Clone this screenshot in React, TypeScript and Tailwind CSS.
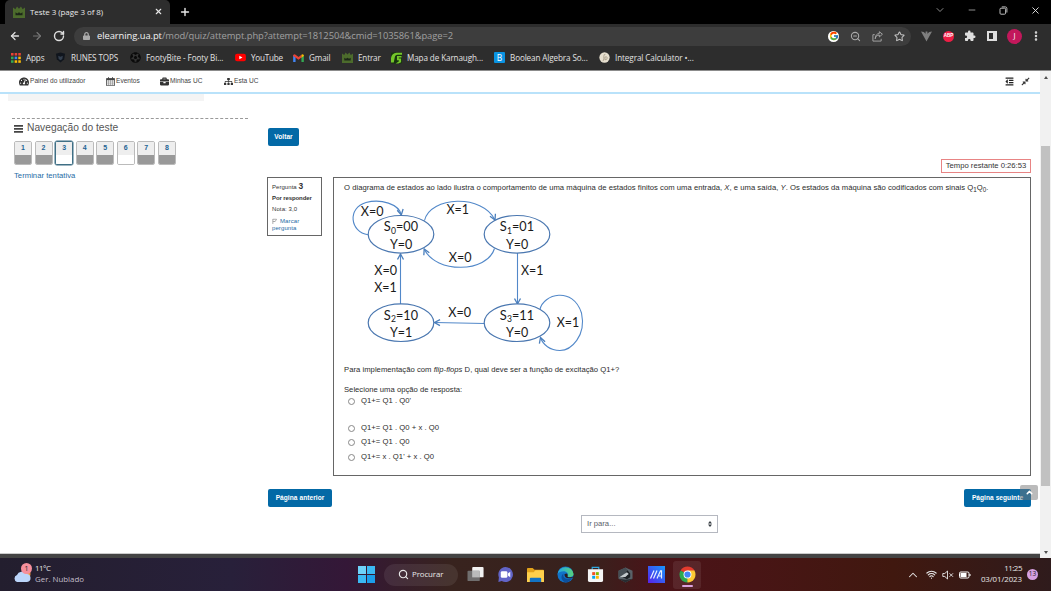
import React from "react";
import {
  FaBars,
  FaBriefcase,
  FaCalendarAlt,
  FaCompressAlt,
  FaLock,
  FaOutdent,
  FaSitemap,
  FaTachometerAlt,
  FaFutbol,
} from "react-icons/fa";
import { FcGoogle } from "react-icons/fc";
import { MdExtension } from "react-icons/md";
import {
  ArrowLeft,
  ArrowRight,
  ChevronDown,
  ChevronUp,
  EllipsisVertical,
  Minus,
  Plus,
  RotateCw,
  Search,
  Star,
  Wifi,
  X,
  ZoomOut,
} from "lucide-react";

function UaLogo({ className }: { className: string }) {
  return (
    <svg viewBox="0 0 12 12" className={className}>
      <path d="M0 1.5 2.4 3.2 4 .6 6 2.8 8 .6 9.6 3.2 12 1.5V12H0Z" fill="#4c6b2c" />
      <path d="M2.5 6.3 4.3 7.4 6 6.3 7.7 7.4 9.5 6.3V9.3H2.5Z" fill="#1c2618" />
    </svg>
  );
}

function TabStrip() {
  return (
    <div className="flex h-6 bg-black text-[#e8e8e8]">
      <div className="ml-[5px] flex h-6 w-[165px] items-center rounded-t-[5px] bg-[#2d2d2d] pr-[7px] pb-px pl-2">
        <UaLogo className="h-[12px] w-[12px]" />
        <span className="ml-[5px] grow text-[8px] tracking-[-0.07px] whitespace-nowrap">Teste 3 (page 3 of 8)</span>
        <X className="h-[9px] w-[9px]" strokeWidth={3} />
      </div>
      <Plus className="mt-[6px] ml-[9px] h-[12px] w-[12px]" strokeWidth={2.8} />
      <div className="ml-auto flex h-5 items-center pr-[10px]">
        <ChevronDown className="mr-[21px] h-[12px] w-[12px] text-[#999]" strokeWidth={1.8} />
        <Minus className="mr-[22px] h-[10px] w-[10px] text-[#aaa]" strokeWidth={2} />
        <svg viewBox="0 0 9 9" className="mr-[22px] h-[9px] w-[9px]" fill="none" stroke="#bbb" strokeWidth="1">
          <rect x="1" y="2.2" width="5.6" height="6" rx="1" />
          <path d="M2.8 .9H6.300Q7.900 .9 7.900 2.500V6.500" />
        </svg>
        <X className="h-[11px] w-[11px]" strokeWidth={2} />
      </div>
    </div>
  );
}

function AddressBar() {
  return (
    <div className="flex h-6 items-center bg-[#2d2d2d] text-[#dedede]">
      <ArrowLeft className="ml-[9px] h-[12px] w-[12px]" strokeWidth={2.6} />
      <ArrowRight className="ml-[10px] h-[12px] w-[12px] text-[#777]" strokeWidth={2.2} />
      <RotateCw className="ml-[10px] h-[12px] w-[12px]" strokeWidth={2.8} />
      <div className="ml-[9px] flex h-[19px] w-[837px] items-center rounded-full bg-[#3d3d3d] pr-[6px] pl-[9px]">
        <FaLock className="h-[8px] w-[7px] text-[#aaa]" />
        <span className="ml-[7px] text-[9.4px] tracking-[-0.065px] whitespace-nowrap text-[#a0a0a0]">
          <span className="text-[#f2f2f2]">elearning.ua.pt</span>/mod/quiz/attempt.php?attempt=1812504&amp;cmid=1035861&amp;page=2
        </span>
        <div className="ml-auto flex items-center">
          <span className="mr-[11px] flex h-[11px] w-[11px] items-center justify-center rounded-full bg-white">
            <FcGoogle className="h-[10px] w-[10px]" />
          </span>
          <ZoomOut className="mr-[11px] h-[11px] w-[11px] text-[#aaa]" strokeWidth={2.3} />
          <svg viewBox="0 0 12 12" className="mr-[11px] h-[11px] w-[11px]" fill="none" stroke="#aaa" strokeWidth="1">
            <path d="M3 4H1V11H10V8.5M3.5 8.5C4 5.5 5.5 4.5 8 4.4V6.5L11.4 3.5 8 .8V2.7C5 3 3.6 5 3.5 8.5Z" />
          </svg>
          <Star className="h-[11px] w-[11px] text-[#c0c0c0]" strokeWidth={2.3} />
        </div>
      </div>
      <svg viewBox="0 0 12 12" className="ml-[10px] h-[12px] w-[11px]">
        <path d="M0 1 3 1.5 5 3.5V1H7V3.5L9 1.5 12 1 7 10 6 12 5 10Z" fill="#7e7e7e" />
      </svg>
      <span className="ml-[11px] flex h-[11px] w-[11px] items-center justify-center rounded-full bg-[#ed1e45] font-[Liberation_Sans] text-[4.6px] leading-none font-bold text-white">
        ABP
      </span>
      <MdExtension className="ml-[10px] h-[12px] w-[12px]" />
      <span className="ml-[11px] h-[10px] w-[10px] border-2 border-r-4 border-[#dedede]" />
      <span className="ml-[10px] flex h-[15px] w-[15px] items-center justify-center rounded-full bg-[#c2185b] text-[7.5px] leading-none text-white">
        J
      </span>
      <EllipsisVertical className="ml-[8px] h-[12px] w-[12px]" strokeWidth={3} />
    </div>
  );
}

function AppsIcon() {
  const colors = ["#ea4335", "#ea4335", "#ea4335", "#34a853", "#4285f4", "#fbbc04", "#34a853", "#fbbc04", "#fbbc04"];
  return (
    <svg viewBox="0 0 11 11" className="h-[10px] w-[10px]">
      {colors.map((c, i) => (
        <rect key={i} x={(i % 3) * 4} y={Math.floor(i / 3) * 4} width="2.8" height="2.8" fill={c} />
      ))}
    </svg>
  );
}

const bookmarks: { width: string; label: string; text: string; icon: React.ReactNode }[] = [
  { width: "w-[45px]", label: "Apps", text: "tracking-[-0.1px]", icon: <AppsIcon /> },
  {
    width: "w-[75px]",
    label: "RUNES TOPS",
    text: "tracking-[-0.1px]",
    icon: (
      <svg viewBox="0 0 12 12" className="h-[11px] w-[11px]">
        <path d="M1 2 6 .5 11 2 10 8 6 11.5 2 8Z" fill="#10151d" />
        <path d="M3.5 4 6 5.2 8.5 4 8 7.5 6 9 4 7.5Z" fill="#34404f" />
      </svg>
    ),
  },
  {
    width: "w-[105px]",
    label: "FootyBite - Footy Bi...",
    text: "tracking-[-0.07px]",
    icon: (
      <span className="flex h-[11px] w-[11px] items-center justify-center rounded-full bg-[#333]">
        <FaFutbol className="h-[11px] w-[11px] text-[#0a0a0a]" />
      </span>
    ),
  },
  {
    width: "w-[58px]",
    label: "YouTube",
    text: "tracking-[-0.2px]",
    icon: (
      <svg viewBox="0 0 12 10" className="h-[9px] w-[11px]">
        <rect y="0.8" width="12" height="8.4" rx="2.2" fill="#f00" />
        <path d="M4.7 3V7L8.2 5Z" fill="#fff" />
      </svg>
    ),
  },
  {
    width: "w-[49px]",
    label: "Gmail",
    text: "tracking-[-0.1px]",
    icon: (
      <svg viewBox="0 0 12 9" className="h-[8px] w-[11px]">
        <path d="M0 1V9H2.7V3.5Z" fill="#4285f4" />
        <path d="M12 1V9H9.3V3.5Z" fill="#34a853" />
        <path d="M0 1.5Q1-.5 2.7.8L6 3.4 9.3.8V4L6 6.6 0 2.2Z" fill="#ea4335" />
        <path d="M9.3.8Q11-.5 12 1.5V2.2L9.3 4.1Z" fill="#fbbc04" />
      </svg>
    ),
  },
  { width: "w-[49px]", label: "Entrar", text: "tracking-[-0.15px]", icon: <UaLogo className="h-[11px] w-[11px]" /> },
  {
    width: "w-[103px]",
    label: "Mapa de Karnaugh...",
    text: "tracking-[-0.1px]",
    icon: (
      <svg viewBox="0 0 12 12" className="h-[12px] w-[12px]">
        <rect width="12" height="12" rx="1" fill="#17330f" />
        <path d="M0 6Q1 .5 6 .3H12V2.500H8Q4.500 2 4 6L3 11H0ZM6.500 3.800H11.500V5.500H8.500V6.600H11V10.500L8 12H5L8.500 9.800V8.500H6.500Z" fill="#74c62a" />
      </svg>
    ),
  },
  {
    width: "w-[105px]",
    label: "Boolean Algebra So...",
    text: "tracking-[-0.1px]",
    icon: (
      <span className="flex h-[11px] w-[11px] items-center justify-center rounded-[1px] bg-[#0a93e2] text-[8.5px] leading-none text-white">
        B
      </span>
    ),
  },
  {
    width: "w-[110px]",
    label: "Integral Calculator •...",
    text: "tracking-[-0.08px]",
    icon: (
      <svg viewBox="0 0 12 12" className="h-[11px] w-[11px]">
        <circle cx="6" cy="6" r="5.6" fill="#e6dfcf" />
        <path d="M4 9.5Q5.3 10 5.3 7V4.5Q5.3 2 7 2.5M6.5 5.5Q9 4.5 9 6.5T6.5 8.5Z" fill="none" stroke="#aaa08b" />
      </svg>
    ),
  },
];

function BookmarkBar() {
  return (
    <div className="flex h-[23px] items-center border-b border-[#8c8c8c] bg-[#2d2d2d] pb-[2px] pl-[10px] text-[8.1px] text-[#e2e2e2]">
      {bookmarks.map((b) => (
        <div key={b.label} className={`flex shrink-0 items-center gap-[5px] ${b.width}`}>
          <span className="flex w-[11px] justify-center">{b.icon}</span>
          <span className={`whitespace-nowrap ${b.text}`}>{b.label}</span>
        </div>
      ))}
    </div>
  );
}

function CalendarIcon() {
  return (
    <svg viewBox="0 0 9 9" className="h-[9px] w-[9px]">
      <path d="M.5 1.500H8.500V8.700H.5Z" fill="#fff" stroke="#444" strokeWidth="0.8" />
      <path d="M.5 1.500H8.500V3.200H.5ZM2 .2H3V2H2ZM6 .2H7V2H6Z" fill="#444" />
      <path d="M.5 5H8.500M.5 6.900H8.500M2.500 3V8.700M4.500 3V8.700M6.500 3V8.700" stroke="#777" strokeWidth="0.5" />
    </svg>
  );
}

function SiteMenu() {
  return (
    <div className="flex h-[23px] items-center border-b-2 border-[#b9e2fa] pr-[10px] pb-px pl-[19px] text-[6.57px] text-[#444]">
      <div className="flex w-[87px] items-center gap-[1px]">
        <FaTachometerAlt className="h-[9px] w-[10px] text-[#333]" />
        Painel do utilizador
      </div>
      <div className="flex w-[54px] items-center gap-[1px]">
        <CalendarIcon />
        Eventos
      </div>
      <div className="flex w-[64px] items-center gap-[1px]">
        <FaBriefcase className="h-[9px] w-[9px] text-[#333]" />
        Minhas UC
      </div>
      <div className="flex items-center gap-[1px]">
        <FaSitemap className="h-[9px] w-[9px] text-[#333]" />
        Esta UC
      </div>
      <FaOutdent className="ml-auto h-[9px] w-[9px] text-[#222]" />
      <FaCompressAlt className="ml-[7px] h-[9px] w-[9px] text-[#333]" />
    </div>
  );
}

const questions = [
  { n: 1, box: "border-[#bbb]", foot: "bg-[#999]" },
  { n: 2, box: "border-[#bbb]", foot: "bg-[#999]" },
  { n: 3, box: "border-[#3f6f85] ring-[0.5px] ring-[#3f6f85]", foot: "bg-white" },
  { n: 4, box: "border-[#bbb]", foot: "bg-[#999]" },
  { n: 5, box: "border-[#bbb]", foot: "bg-[#999]" },
  { n: 6, box: "border-[#bbb]", foot: "bg-white" },
  { n: 7, box: "border-[#bbb]", foot: "bg-[#999]" },
  { n: 8, box: "border-[#bbb]", foot: "bg-[#999]" },
];

function QuizNavigation() {
  return (
    <aside className="flex w-[268px] shrink-0 flex-col">
      <div className="ml-2 h-[7px] w-[196px] bg-[#f4f4f4]" />
      <div className="mt-[17px] ml-[12px] w-[236px] border-t border-dashed border-[#999]" />
      <div className="mt-[2px] ml-[14px] flex h-[14px] items-center gap-[4px] text-[10.25px] text-[#555]">
        <svg viewBox="0 0 9 9" className="h-[9px] w-[9px]" fill="#444">
          <path d="M0 1H9V2.700H0ZM0 4H9V5.700H0ZM0 7H9V8.700H0Z" />
        </svg>
        Navegação do teste
      </div>
      <div className="mt-[6px] ml-[14px] flex gap-[2.55px]">
        {questions.map((q) => (
          <div
            key={q.n}
            className={`flex h-[24px] w-[18px] flex-col overflow-hidden rounded-[2px] border text-center text-[7px] leading-[12px] font-bold text-[#1d6394] ${q.box}`}
          >
            <div className="h-[13px] bg-[#eee]">{q.n}</div>
            <div className={`grow ${q.foot}`} />
          </div>
        ))}
      </div>
      <div className="mt-[6px] ml-[14px] text-[7.66px] leading-[9px] tracking-[0.03px] text-[#1d6aa5]">Terminar tentativa</div>
    </aside>
  );
}

const ink = "#1a1a1a";

function Label({ x, y, w, children }: { x: number; y: number; w: number; children: string }) {
  return (
    <text x={x} y={y} textLength={w} lengthAdjust="spacingAndGlyphs" fontSize="13.6" fill={ink} className="font-[Lato]">
      {children}
    </text>
  );
}

function StateNode({ cx, cy, index, code, output }: { cx: number; cy: number; index: string; code: string; output: string }) {
  return (
    <g className="font-[Lato]">
      <ellipse cx={cx} cy={cy} rx="32.8" ry="18.8" fill="#fff" stroke="#4a77b0" strokeWidth="1.2" />
      <Label x={cx - 17.2} y={cy - 3} w={7}>
        S
      </Label>
      <text x={cx - 10} y={cy - 0.4} fontSize="8.6" fill={ink}>
        {index}
      </text>
      <Label x={cx - 5} y={cy - 3} w={22}>
        {"=" + code}
      </Label>
      <Label x={cx - 11} y={cy + 14.4} w={22.3}>
        {"Y=" + output}
      </Label>
    </g>
  );
}

function StateDiagram() {
  return (
    <svg viewBox="344 197 246 158" className="block h-[158px] w-[246px]">
      <defs>
        <marker id="tip" viewBox="0 0 8 8" refX="6.5" refY="4" markerWidth="8" markerHeight="8" markerUnits="userSpaceOnUse" orient="auto">
          <path d="M1 1 6.5 4 1 7" fill="none" stroke="#4a7ebb" strokeWidth="1.3" />
        </marker>
      </defs>
      <g fill="none" stroke="#5288c9" strokeWidth="1.1">
        <path d="M368 234.7C350 232 347 208 366 202.5C381 198.500 399 204 401.300 215" markerEnd="url(#tip)" />
        <path d="M424.500 220.500C430 196 483 194 495 220" markerEnd="url(#tip)" />
        <path d="M494.500 248.500C487 273 436 274 424.200 249" markerEnd="url(#tip)" />
        <path d="M517.500 253V304" markerEnd="url(#tip)" />
        <path d="M484.500 323.500 434.500 322.500" markerEnd="url(#tip)" />
        <path d="M400.500 304V254" markerEnd="url(#tip)" />
        <path d="M540 309.500C543 294 573 286 581.500 313C586.500 336 571 350.500 560 350.500C550 350.300 543 345 540.500 337.500" markerEnd="url(#tip)" />
      </g>
      <StateNode cx={401} cy={234.3} index="0" code="00" output="0" />
      <StateNode cx={517} cy={234.3} index="1" code="01" output="0" />
      <StateNode cx={401} cy={322.7} index="2" code="10" output="1" />
      <StateNode cx={517} cy={322.7} index="3" code="11" output="0" />
      <Label x={360.800} y={216} w={22.800}>X=0</Label>
      <Label x={446.500} y={214.300} w={22.500}>X=1</Label>
      <Label x={448.800} y={262} w={22.800}>X=0</Label>
      <Label x={374.300} y={274.500} w={22.800}>X=0</Label>
      <Label x={374.300} y={292} w={22.500}>X=1</Label>
      <Label x={521} y={274.500} w={22.500}>X=1</Label>
      <Label x={448.300} y={316.800} w={22.800}>X=0</Label>
      <Label x={556.800} y={326.500} w={22.500}>X=1</Label>
    </svg>
  );
}

const options = [
  { label: "Q1+= Q1 . Q0'", row: "h-[14px]" },
  { label: "Q1+= Q1 . Q0 + x . Q0", row: "mt-[13px] h-[14px]" },
  { label: "Q1+= Q1 . Q0", row: "h-[15px]" },
  { label: "Q1+= x . Q1' + x . Q0", row: "h-[14px]" },
];

const button =
  "flex h-[18px] items-center justify-center rounded-[2px] bg-[#0369a6] text-[6.57px] font-bold tracking-[0.06px] whitespace-nowrap text-white";

function QuestionInfo() {
  return (
    <div className="flex h-[59px] w-[55px] shrink-0 flex-col border border-[#666] pt-[3px] pl-[4px] text-[6px] font-bold text-[#333]">
      <div className="h-[10px] leading-[10px]">
        <span className="font-normal tracking-[0.05px]">Pergunta</span> <span className="text-[8.4px]">3</span>
      </div>
      <div className="mt-[3px] h-[9px] leading-[9px] tracking-[-0.1px]">Por responder</div>
      <div className="mt-[2px] h-[9px] leading-[9px] font-normal tracking-[0.1px]">Nota: 3,0</div>
      <div className="mt-[3px] flex h-[8px] items-center gap-[3px] font-normal tracking-[0.1px] text-[#1d6aa5]">
        <svg viewBox="0 0 6 7" className="h-[7px] w-[5px]" fill="none" stroke="#888" strokeWidth="0.8">
          <path d="M1 .5V6.500M1 .8H5.500L3.800 3.500H1" />
        </svg>
        Marcar
      </div>
      <div className="h-[7px] leading-[7px] font-normal tracking-[0.1px] text-[#1d6aa5]">pergunta</div>
    </div>
  );
}

function QuestionBox() {
  return (
    <div className="flex h-[299px] w-[698px] flex-col border border-[#666] pl-[10px] text-[7.66px] text-[#2b2b2b]">
      <div className="mt-[4px] h-[15px] leading-[11px] tracking-[0.023px] whitespace-nowrap">
        O diagrama de estados ao lado ilustra o comportamento de uma máquina de estados finitos com uma entrada, <i>X</i>, e uma
        saída, <i>Y</i>. Os estados da máquina são codificados com sinais Q<sub className="text-[6.3px]">1</sub>Q
        <sub className="text-[6.3px]">0</sub>.
      </div>
      <StateDiagram />
      <div className="mt-[9px] h-[11px] leading-[11px] tracking-[0.03px]">
        Para implementação com <i>flip-flops</i> D, qual deve ser a função de excitação Q1+?
      </div>
      <div className="mt-[9px] h-[11px] leading-[11px] tracking-[0.01px]">Selecione uma opção de resposta:</div>
      {options.map((o) => (
        <div key={o.label} className={`flex items-start ${o.row}`}>
          <span className="mt-[2.500px] ml-[4px] h-[7px] w-[7px] rounded-full border-[0.800px] border-[#888]" />
          <span className="ml-[6px] leading-[12px] tracking-[0.04px]">{o.label}</span>
        </div>
      ))}
    </div>
  );
}

function QuizPage() {
  return (
    <div className="flex h-[487px] bg-white font-[Liberation_Sans]">
      <div className="flex w-[1040px] flex-col">
        <SiteMenu />
        <div className="flex h-[459px]">
          <QuizNavigation />
          <main className="flex w-[763px] flex-col">
            <div className={`mt-[34px] w-[31px] ${button}`}>Voltar</div>
            <div className="mt-[13px] ml-auto flex h-[14px] w-[90px] items-center justify-center border border-[#e88484] text-[7.66px] whitespace-nowrap text-[#333]">
              Tempo restante 0:26:53
            </div>
            <div className="mt-[4px] -ml-px flex justify-between">
              <QuestionInfo />
              <QuestionBox />
            </div>
            <div className="mt-[13px] flex justify-between">
              <div className={`w-[64px] ${button}`}>Página anterior</div>
              <div className={`relative w-[67px] ${button}`}>
                Página seguinte
                <div className="absolute -top-[4px] left-[56px] flex h-[15px] w-[18px] items-center justify-center rounded-[2px] bg-[#777]/50">
                  <ChevronUp className="h-[9px] w-[9px] text-white" strokeWidth={4} />
                </div>
              </div>
            </div>
            <div className="mt-[8px] ml-[313px] flex h-[18px] w-[137px] items-center justify-between border border-[#b5b8c0] px-[5px] pb-px text-[7.66px] text-[#5a6068]">
              Ir para...
              <svg viewBox="0 0 4 6" className="h-[6px] w-[4px]" fill="#343a40">
                <path d="M0 2.500 2 0 4 2.500ZM0 3.500H4L2 6Z" />
              </svg>
            </div>
          </main>
        </div>
        <div className="h-[5px] border-t border-[#ccc] bg-[#444]" />
      </div>
      <div className="flex w-[11px] flex-col items-center bg-[#f1f1f1]">
        <div className="mt-[5px] h-0 w-0 border-x-[2.500px] border-b-[3px] border-x-transparent border-b-[#505050]" />
        <div className="mt-[67px] h-[340px] w-[9px] bg-[#c1c1c1]" />
        <div className="mt-auto mb-[4px] h-0 w-0 border-x-[2.500px] border-t-[3px] border-x-transparent border-t-[#505050]" />
      </div>
    </div>
  );
}

function TaskbarIcons() {
  return (
    <div className="flex items-center">
      <svg viewBox="0 0 18 18" className="mr-[12px] h-[17px] w-[18px]">
        <rect x="5" y="1" width="12" height="11" rx="1" fill="#f2f2f2" />
        <rect x="0" y="5" width="13" height="11" rx="1" fill="#777" fillOpacity="0.9" />
        <rect x="5" y="5" width="8" height="7" fill="#bbb" />
      </svg>
      <svg viewBox="0 0 18 18" className="mr-[13px] h-[17px] w-[17px]">
        <path d="M9 1A8 8 0 1 1 5 16L1.500 17 2 12A8 8 0 0 1 9 1Z" fill="#6264c7" />
        <rect x="4" y="5.500" width="7" height="7" rx="1.500" fill="#fff" />
        <path d="M11.500 8 14 6V12L11.500 10Z" fill="#fff" />
      </svg>
      <svg viewBox="0 0 18 16" className="mr-[13px] h-[16px] w-[17px]">
        <path d="M0 1.500Q0 .5 1 .5H6L8 2.500H17Q18 2.500 18 3.500V15H0Z" fill="#e2a21b" />
        <path d="M0 5H7L9 3H17Q18 3 18 4V15.500H0Z" fill="#ffd04c" />
        <path d="M3 15.500V12Q3 11 4 11H14Q15 11 15 12V15.500Z" fill="#1273c4" />
      </svg>
      <svg viewBox="0 0 18 18" className="mr-[13px] h-[17px] w-[17px]">
        <defs>
          <linearGradient id="edge" x1="0" y1="0" x2="1" y2="0">
            <stop offset="0" stopColor="#1fa3e8" />
            <stop offset="1" stopColor="#58d37a" />
          </linearGradient>
        </defs>
        <circle cx="9" cy="9" r="8.500" fill="#1173c9" />
        <path d="M.5 8.500A8.600 8.600 0 0 1 17.500 8.500C17.500 12 12 12.500 11 11C13 8 10 5.500 7 5.500Q2.500 5.500.5 8.500Z" fill="url(#edge)" />
        <path d="M7 8C5.500 12 9 15 16 13Q13 17.500 9 17.400C3.500 15 4 10 7 8Z" fill="#0c4f9c" />
        <path d="M8 8.500C7.500 12.500 11 14 16.500 12.500L17.500 11Q13 13 11 11 12 9.500 10.500 8Z" fill="#2b1a1c" />
      </svg>
      <svg viewBox="0 0 18 18" className="mr-[14px] h-[17px] w-[17px]">
        <path d="M5.500 4V1.500H12.500V4" fill="none" stroke="#2fa8e0" strokeWidth="1.200" />
        <path d="M1 3.500H17V15Q17 17 15 17H3Q1 17 1 15Z" fill="#f5f5f5" />
        <path d="M5.500 6.500H8.600V9.600H5.500Z" fill="#f25022" />
        <path d="M9.400 6.500H12.500V9.600H9.400Z" fill="#7fba00" />
        <path d="M5.500 10.400H8.600V13.500H5.500Z" fill="#00a4ef" />
        <path d="M9.400 10.400H12.500V13.500H9.400Z" fill="#ffb900" />
      </svg>
      <svg viewBox="0 0 16 17" className="mr-[15px] h-[16px] w-[15px]">
        <path d="M8 .5 15.500 4V12.500L8 16.500.5 12.500V4Z" fill="#596268" />
        <path d="M8 .5 11 4.500 2 10.500.5 11V4Z" fill="#454e54" />
        <path d="M10 3.500 13 7V11L9.500 13 5 11 7 8.500Z" fill="#1b2024" />
        <path d="M1.500 11 9.500 5.500 11.500 7.500 8 10.500Z" fill="#c3cacd" />
        <path d="M8 10.500 11.500 7.500 10.500 10Z" fill="#20262b" />
        <path d="M.5 12.500 8 16.500 15.500 12.500 8 13.500Z" fill="#272c31" />
      </svg>
      <svg viewBox="0 0 17 17" className="mr-[8px] h-[17px] w-[17px]">
        <defs>
          <linearGradient id="armoury" x1="1" y1="0" x2="0" y2="1">
            <stop offset="0" stopColor="#1597ff" />
            <stop offset="1" stopColor="#5a20e8" />
          </linearGradient>
        </defs>
        <rect width="17" height="17" fill="url(#armoury)" />
        <path d="M2.500 12.500 6 4.500M5.500 12.500 9 4.500M9 12.500 12.500 4.800H13.500V12.500M11 10H13.500" fill="none" stroke="#eaf2ff" strokeWidth="1.200" />
      </svg>
      <div className="flex h-[28px] w-[28px] flex-col items-center rounded-[3px] bg-white/8 pt-[5px]">
        <svg viewBox="0 0 18 18" className="h-[17px] w-[17px]">
          <path d="M9 9 1.640 4.750A8.500 8.500 0 0 1 16.360 4.750Z" fill="#e33b2e" />
          <path d="M9 9 16.360 4.750A8.500 8.500 0 0 1 9 17.500Z" fill="#fcc934" />
          <path d="M9 9V17.500A8.500 8.500 0 0 1 1.640 4.750Z" fill="#2da94f" />
          <path d="M9 4.800H16.400L12.700 11 9 17.500Z" fill="#fcc934" />
          <circle cx="9" cy="9" r="4.200" fill="#fff" />
          <circle cx="9" cy="9" r="3.300" fill="#4285f4" />
        </svg>
        <div className="mt-[2px] h-[2px] w-[11px] rounded-full bg-[#dba3df]" />
      </div>
    </div>
  );
}

function Taskbar() {
  return (
    <div className="flex h-[33px] items-center bg-[linear-gradient(90deg,#231e2e_0%,#28203a_22%,#341737_33%,#38231e_43%,#38211d_56%,#4b1318_63%,#481515_72%,#40180f_85%,#2f1b1c_100%)] text-[7.9px] text-[#e8e8e8]">
      <div className="flex w-[358px] items-center">
        <div className="relative ml-[13px] h-[22px] w-[19px]">
          <svg viewBox="0 0 19 20" className="-mt-px h-[20px] w-[19px]">
            <circle cx="14" cy="11" r="3.500" fill="#f0973c" />
            <path d="M4 19A3.700 3.700 0 0 1 4 12 5 5 0 0 1 13 11 4 4 0 0 1 14 19Z" fill="#bcd5fa" />
          </svg>
          <span className="absolute -top-px left-[8px] flex h-[11px] w-[11px] items-center justify-center rounded-full bg-[#f68f9c] text-[7px] leading-none text-[#222]">
            1
          </span>
        </div>
        <div className="ml-[3px] pb-px leading-[11px] whitespace-nowrap">
          <div className="tracking-[-0.5px]">11°C</div>
          <div className="text-[#c3bdc9]">Ger. Nublado</div>
        </div>
      </div>
      <svg viewBox="0 0 17 17" className="h-[17px] w-[17px]">
        <path d="M0 0H8V8H0Z" fill="#6ed2f9" />
        <path d="M9 0H17V8H9ZM0 9H8V17H0Z" fill="#3bb9f3" />
        <path d="M9 9H17V17H9Z" fill="#1b9eea" />
      </svg>
      <div className="mr-[9px] ml-[9px] flex h-[22px] w-[74px] items-center rounded-full bg-white/8 pl-[14px]">
        <Search className="h-[11px] w-[11px]" strokeWidth={2.500} />
        <span className="ml-[3px] tracking-[-0.1px]">Procurar</span>
      </div>
      <TaskbarIcons />
      <div className="ml-auto flex items-center pr-[13px]">
        <ChevronUp className="h-[14px] w-[14px]" strokeWidth={1.800} />
        <Wifi className="ml-[6px] h-[11px] w-[11px]" strokeWidth={2.500} />
        <svg viewBox="0 0 12 10" className="ml-[5px] h-[10px] w-[12px]" fill="none" stroke="#e8e8e8" strokeWidth="0.900">
          <path d="M.8 3.500H2.800L5.500 1V9L2.800 6.500H.8ZM7.500 3.300 11 6.800M11 3.300 7.500 6.800" />
        </svg>
        <svg viewBox="0 0 12 8" className="ml-[5px] h-[8px] w-[12px]">
          <rect x="0.500" y="1" width="9.500" height="6" rx="1.300" fill="none" stroke="#fff" />
          <rect x="1.500" y="2" width="6" height="4" fill="#fff" />
          <path d="M10.500 3H11.500V5H10.500Z" fill="#fff" />
        </svg>
        <div className="ml-[9px] w-[42px] pb-px text-right leading-[11px] whitespace-nowrap">
          <div className="tracking-[-0.450px]">11:25</div>
          <div className="tracking-[-0.080px]">03/01/2023</div>
        </div>
        <span className="ml-[5px] flex h-[11px] w-[11px] items-center justify-center rounded-full bg-[#d6a0e0] text-[6.500px] leading-none text-[#222]">
          13
        </span>
      </div>
    </div>
  );
}

export default function App() {
  return (
    <div className="flex h-[591px] w-[1051px] flex-col overflow-hidden bg-white font-['Open_Sans','Noto_Sans',sans-serif]">
      <TabStrip />
      <AddressBar />
      <BookmarkBar />
      <QuizPage />
      <Taskbar />
    </div>
  );
}
